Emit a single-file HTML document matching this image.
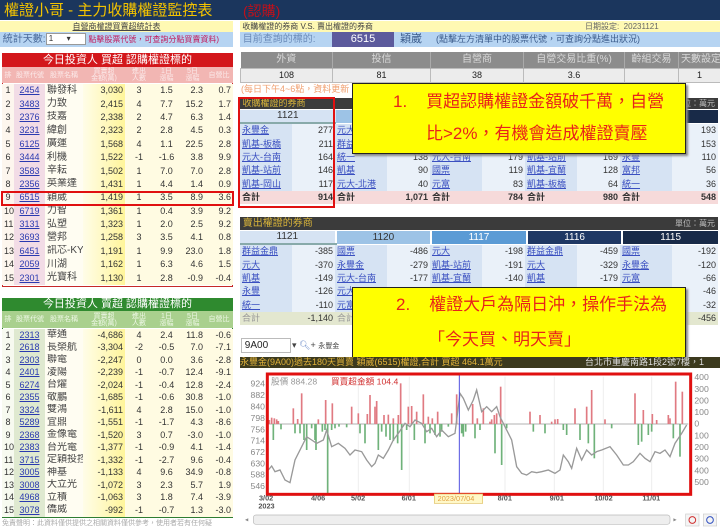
<!DOCTYPE html>
<html><head><meta charset="utf-8">
<style>
*{margin:0;padding:0;box-sizing:border-box}
body{width:720px;height:529px;overflow:hidden;background:#fff;font-family:"Liberation Sans","Noto Sans CJK TC",sans-serif;font-size:9px;color:#333;position:relative}
.a{position:absolute}
table{border-collapse:collapse;table-layout:fixed}
td{white-space:nowrap;overflow:hidden;padding:0 2px;line-height:1}
.lt td{height:13.4px;text-align:right;font-size:9px;color:#333}
.lt td.c0{text-align:center;background:#fdf6ee}
.lt td.c1{text-align:center;background:#f2dce6}
.lt td.c1 u{color:#2a3ab0}
.lt td.c2{text-align:left;background:#fffdf2;font-size:10px;color:#444}
.lt td.c3{background:linear-gradient(90deg,#fffde8,#fff59a)}
.lt td.cx{background:#fffbe2;text-align:center}
.lt td.cy{background:#fffbe2}
.gt td{height:12.5px}
.gt td.c1{background:#dfe9d0}
.gt td.c0{background:#f7faf0}
.bk td{height:13.4px;font-size:9px}
.bk td.n{background:#d6e3f3;text-align:left}
.bk td.n u{color:#3a4fc0}
.bk td.v{background:#eaf1f9;text-align:right}
.bk tr.s td{background:#f6dada;font-weight:bold;color:#333}
.sk tr.s td{background:#e3e7cf;font-weight:normal}
.dh td{height:13px;text-align:center;font-size:10px}
</style></head><body>

<!-- title bar -->
<div class="a" style="left:0;top:0;width:720px;height:20px;background:#1b365d"></div>
<div class="a" style="left:4px;top:2px;font-size:15px;color:#f3c300;line-height:17px;white-space:nowrap">權證小哥 - 主力收購權證監控表</div>
<div class="a" style="left:243px;top:3px;font-size:14px;color:#c0101a;line-height:16px;white-space:nowrap">(認購)</div>

<!-- subheaders -->
<div class="a" style="left:0;top:21px;width:233px;height:11px;background:#fff9b3;text-align:center;font-size:8px;line-height:11px;color:#444;white-space:nowrap"><u>自營商權證買賣超統計表</u></div>
<div class="a" style="left:240px;top:21px;width:480px;height:11px;background:#fff9b3;font-size:8px;line-height:11px;color:#444;white-space:nowrap">&nbsp;收購權證的券商 V.S. 賣出權證的券商<span style="position:absolute;left:345px;color:#666">日期設定: &nbsp;20231121</span></div>

<div class="a" style="left:0;top:32px;width:233px;height:15px;background:#b6d4f2;font-size:10px;line-height:15px;color:#4a6a9a;white-space:nowrap;overflow:hidden">&nbsp;統計天數:<span style="display:inline-block;width:40px;height:12px;background:#fff;border:1px solid #999;vertical-align:middle;font-size:8px;line-height:10px;color:#333">&nbsp;1 &nbsp;&nbsp;&nbsp;&nbsp;&nbsp;▾</span> <span style="color:#c2185b;font-size:8px">點擊股票代號，可查詢分點買賣資料)</span></div>
<div class="a" style="left:240px;top:32px;width:480px;height:15px;background:#b6d4f2;font-size:10px;line-height:15px;color:#6a8ab8;white-space:nowrap">&nbsp;目前查詢的標的:
<span style="position:absolute;left:92px;top:0;width:62px;height:15px;background:#5c5a9c;color:#fff;text-align:center;font-size:11px">6515</span>
<span style="position:absolute;left:160px;color:#3a5a8a;font-size:11px">穎崴</span>
<span style="position:absolute;left:196px;color:#3a5a8a;font-size:9px">(點擊左方清單中的股票代號，可查詢分點進出狀況)</span></div>

<!-- left red table -->
<div class="a" style="left:2px;top:53px;width:231px;height:234px;border:1px solid #c62828"></div>
<div class="a" style="left:2px;top:53px;width:231px;height:14px;background:#d3171b;color:#fff;text-align:center;font-size:11px;line-height:14px">今日投資人 買超 認購權證標的</div>
<table class="a" style="left:2px;top:67px;width:231px">
<colgroup><col style="width:12px"><col style="width:31px"><col style="width:38px"><col style="width:42px"><col style="width:28px"><col style="width:27px"><col style="width:25px"><col style="width:28px"></colgroup>
<tr style="height:16px;background:#f2b6b3;color:#fbeaea;font-size:7px;text-align:center"><td>排</td><td>股票代號</td><td>股票名稱</td><td>買賣超<br>金額(萬)</td><td>進出<br>人數</td><td>1日<br>漲幅</td><td>5日<br>漲幅</td><td>自營比</td></tr>
</table>
<table class="a lt" style="left:2px;top:84px;width:231px">
<colgroup><col style="width:12px"><col style="width:31px"><col style="width:38px"><col style="width:42px"><col style="width:28px"><col style="width:27px"><col style="width:25px"><col style="width:28px"></colgroup>
<tr><td class="c0">1</td><td class="c1"><u>2454</u></td><td class="c2">聯發科</td><td class="c3">3,030</td><td class="cx">3</td><td class="cx">1.5</td><td class="cy">2.3</td><td class="cy">0.7</td></tr>
<tr><td class="c0">2</td><td class="c1"><u>3483</u></td><td class="c2">力致</td><td class="c3">2,415</td><td class="cx">4</td><td class="cx">7.7</td><td class="cy">15.2</td><td class="cy">1.7</td></tr>
<tr><td class="c0">3</td><td class="c1"><u>2376</u></td><td class="c2">技嘉</td><td class="c3">2,338</td><td class="cx">2</td><td class="cx">4.7</td><td class="cy">6.3</td><td class="cy">1.4</td></tr>
<tr><td class="c0">4</td><td class="c1"><u>3231</u></td><td class="c2">緯創</td><td class="c3">2,323</td><td class="cx">2</td><td class="cx">2.8</td><td class="cy">4.5</td><td class="cy">0.3</td></tr>
<tr><td class="c0">5</td><td class="c1"><u>6125</u></td><td class="c2">廣運</td><td class="c3">1,568</td><td class="cx">4</td><td class="cx">1.1</td><td class="cy">22.5</td><td class="cy">2.8</td></tr>
<tr><td class="c0">6</td><td class="c1"><u>3444</u></td><td class="c2">利機</td><td class="c3">1,522</td><td class="cx">-1</td><td class="cx">-1.6</td><td class="cy">3.8</td><td class="cy">9.9</td></tr>
<tr><td class="c0">7</td><td class="c1"><u>3583</u></td><td class="c2">辛耘</td><td class="c3">1,502</td><td class="cx">1</td><td class="cx">7.0</td><td class="cy">7.0</td><td class="cy">2.8</td></tr>
<tr><td class="c0">8</td><td class="c1"><u>2356</u></td><td class="c2">英業達</td><td class="c3">1,431</td><td class="cx">1</td><td class="cx">4.4</td><td class="cy">1.4</td><td class="cy">0.9</td></tr>
<tr><td class="c0">9</td><td class="c1"><u>6515</u></td><td class="c2">穎崴</td><td class="c3">1,419</td><td class="cx">1</td><td class="cx">3.5</td><td class="cy">8.9</td><td class="cy">3.6</td></tr>
<tr><td class="c0">10</td><td class="c1"><u>6719</u></td><td class="c2">力智</td><td class="c3">1,361</td><td class="cx">1</td><td class="cx">0.4</td><td class="cy">3.9</td><td class="cy">9.2</td></tr>
<tr><td class="c0">11</td><td class="c1"><u>3131</u></td><td class="c2">弘塑</td><td class="c3">1,323</td><td class="cx">1</td><td class="cx">2.0</td><td class="cy">2.5</td><td class="cy">9.2</td></tr>
<tr><td class="c0">12</td><td class="c1"><u>3693</u></td><td class="c2">營邦</td><td class="c3">1,258</td><td class="cx">3</td><td class="cx">3.5</td><td class="cy">4.1</td><td class="cy">0.8</td></tr>
<tr><td class="c0">13</td><td class="c1"><u>6451</u></td><td class="c2">訊芯-KY</td><td class="c3">1,191</td><td class="cx">1</td><td class="cx">9.9</td><td class="cy">23.0</td><td class="cy">1.8</td></tr>
<tr><td class="c0">14</td><td class="c1"><u>2059</u></td><td class="c2">川湖</td><td class="c3">1,162</td><td class="cx">1</td><td class="cx">6.3</td><td class="cy">4.6</td><td class="cy">1.5</td></tr>
<tr><td class="c0">15</td><td class="c1"><u>2301</u></td><td class="c2">光寶科</td><td class="c3">1,130</td><td class="cx">1</td><td class="cx">2.8</td><td class="cy">-0.9</td><td class="cy">-0.4</td></tr>
</table>
<div class="a" style="left:1px;top:191px;width:233px;height:15px;border:2px solid #e01010"></div>

<!-- left green table -->
<div class="a" style="left:2px;top:298px;width:231px;height:220px;border:1px solid #2e7d32"></div>
<div class="a" style="left:2px;top:298px;width:231px;height:13px;background:#2f8a2f;color:#fff;text-align:center;font-size:11px;line-height:13px">今日投資人 賣超 認購權證標的</div>
<table class="a" style="left:2px;top:311px;width:231px">
<colgroup><col style="width:12px"><col style="width:31px"><col style="width:38px"><col style="width:42px"><col style="width:28px"><col style="width:27px"><col style="width:25px"><col style="width:28px"></colgroup>
<tr style="height:17px;background:#a9d08e;color:#eef7e6;font-size:7px;text-align:center"><td>排</td><td>股票代號</td><td>股票名稱</td><td>買賣超<br>金額(萬)</td><td>進出<br>人數</td><td>1日<br>漲幅</td><td>5日<br>漲幅</td><td>自營比</td></tr>
</table>
<table class="a lt gt" style="left:2px;top:329px;width:231px">
<colgroup><col style="width:12px"><col style="width:31px"><col style="width:38px"><col style="width:42px"><col style="width:28px"><col style="width:27px"><col style="width:25px"><col style="width:28px"></colgroup>
<tr><td class="c0">1</td><td class="c1"><u>2313</u></td><td class="c2">華通</td><td class="c3">-4,686</td><td class="cx">4</td><td class="cx">2.4</td><td class="cy">11.8</td><td class="cy">-0.6</td></tr>
<tr><td class="c0">2</td><td class="c1"><u>2618</u></td><td class="c2">長榮航</td><td class="c3">-3,304</td><td class="cx">-2</td><td class="cx">-0.5</td><td class="cy">7.0</td><td class="cy">-7.1</td></tr>
<tr><td class="c0">3</td><td class="c1"><u>2303</u></td><td class="c2">聯電</td><td class="c3">-2,247</td><td class="cx">0</td><td class="cx">0.0</td><td class="cy">3.6</td><td class="cy">-2.8</td></tr>
<tr><td class="c0">4</td><td class="c1"><u>2401</u></td><td class="c2">凌陽</td><td class="c3">-2,239</td><td class="cx">-1</td><td class="cx">-0.7</td><td class="cy">12.4</td><td class="cy">-9.1</td></tr>
<tr><td class="c0">5</td><td class="c1"><u>6274</u></td><td class="c2">台燿</td><td class="c3">-2,024</td><td class="cx">-1</td><td class="cx">-0.4</td><td class="cy">12.8</td><td class="cy">-2.4</td></tr>
<tr><td class="c0">6</td><td class="c1"><u>2355</u></td><td class="c2">敬鵬</td><td class="c3">-1,685</td><td class="cx">-1</td><td class="cx">-0.6</td><td class="cy">30.8</td><td class="cy">-1.0</td></tr>
<tr><td class="c0">7</td><td class="c1"><u>3324</u></td><td class="c2">雙鴻</td><td class="c3">-1,611</td><td class="cx">4</td><td class="cx">2.8</td><td class="cy">15.0</td><td class="cy">-1.0</td></tr>
<tr><td class="c0">8</td><td class="c1"><u>5289</u></td><td class="c2">宜鼎</td><td class="c3">-1,551</td><td class="cx">-1</td><td class="cx">-1.7</td><td class="cy">4.3</td><td class="cy">-8.6</td></tr>
<tr><td class="c0">9</td><td class="c1"><u>2368</u></td><td class="c2">金像電</td><td class="c3">-1,520</td><td class="cx">3</td><td class="cx">0.7</td><td class="cy">-3.0</td><td class="cy">-1.0</td></tr>
<tr><td class="c0">10</td><td class="c1"><u>2383</u></td><td class="c2">台光電</td><td class="c3">-1,377</td><td class="cx">-1</td><td class="cx">-0.9</td><td class="cy">4.1</td><td class="cy">-1.4</td></tr>
<tr><td class="c0">11</td><td class="c1"><u>3715</u></td><td class="c2">定穎投控</td><td class="c3">-1,332</td><td class="cx">-1</td><td class="cx">-2.7</td><td class="cy">9.6</td><td class="cy">-0.4</td></tr>
<tr><td class="c0">12</td><td class="c1"><u>3005</u></td><td class="c2">神基</td><td class="c3">-1,133</td><td class="cx">4</td><td class="cx">9.6</td><td class="cy">34.9</td><td class="cy">-0.8</td></tr>
<tr><td class="c0">13</td><td class="c1"><u>3008</u></td><td class="c2">大立光</td><td class="c3">-1,072</td><td class="cx">3</td><td class="cx">2.3</td><td class="cy">5.7</td><td class="cy">1.9</td></tr>
<tr><td class="c0">14</td><td class="c1"><u>4968</u></td><td class="c2">立積</td><td class="c3">-1,063</td><td class="cx">3</td><td class="cx">1.8</td><td class="cy">7.4</td><td class="cy">-3.9</td></tr>
<tr><td class="c0">15</td><td class="c1"><u>3078</u></td><td class="c2">僑威</td><td class="c3">-992</td><td class="cx">-1</td><td class="cx">-0.7</td><td class="cy">1.3</td><td class="cy">-3.0</td></tr>
</table>
<div class="a" style="left:2px;top:519px;font-size:7px;color:#aaa;line-height:9px;white-space:nowrap">免責聲明：此資料僅供提供之相關資料僅供參考，使用者若有任何疑</div>

<!-- right summary -->
<table class="a" style="left:240px;top:52px;width:480px">
<colgroup><col style="width:92px"><col style="width:98px"><col style="width:93px"><col style="width:101px"><col style="width:54px"><col style="width:42px"></colgroup>
<tr style="height:16px;background:#8c8c8c;color:#d8d8d8;font-size:10px;text-align:center"><td style="border-right:1px solid #aaa">外資</td><td style="border-right:1px solid #aaa">投信</td><td style="border-right:1px solid #aaa">自營商</td><td style="border-right:1px solid #aaa">自營交易比重(%)</td><td style="border-right:1px solid #aaa">齡組交易</td><td>天數設定</td></tr>
<tr style="height:14px;background:#ececec;font-size:9px;text-align:center;color:#222"><td style="border:1px solid #bbb">108</td><td style="border:1px solid #bbb">81</td><td style="border:1px solid #bbb">38</td><td style="border:1px solid #bbb">3.6</td><td style="border:1px solid #bbb"></td><td style="border:1px solid #bbb">1</td></tr>
</table>
<div class="a" style="left:241px;top:84px;font-size:9px;color:#f0a070;line-height:10px;white-space:nowrap">(每日下午4~6點，資料更新</div>

<!-- buy brokers -->
<div class="a" style="left:240px;top:98px;width:478px;height:11px;background:#3b3b3b;color:#d9b43a;font-size:9px;line-height:11px;white-space:nowrap">&nbsp;收購權證的券商<span style="position:absolute;right:3px;color:#bbb;font-size:8px">單位：萬元</span></div>
<table class="a dh" style="left:240px;top:110px;width:478px">
<tr><td style="background:#d6e3f3;border-bottom:2px solid #8aa">1121</td><td style="background:#9dc3e6">1120</td><td style="background:#5b9bd5;color:#fff">1117</td><td style="background:#1f3864;color:#fff">1116</td><td style="background:#182a48;color:#fff">1115</td></tr>
</table>
<table class="a bk" style="left:240px;top:124px;width:478px">
<colgroup><col style="width:52px"><col style="width:43px"><col style="width:52px"><col style="width:43px"><col style="width:52px"><col style="width:43px"><col style="width:52px"><col style="width:43px"><col style="width:52px"><col style="width:46px"></colgroup>
<tr><td class="n"><u>永豐金</u></td><td class="v">277</td><td class="n"><u>元大</u></td><td class="v"></td><td class="n"></td><td class="v"></td><td class="n"></td><td class="v"></td><td class="n"></td><td class="v">193</td></tr>
<tr><td class="n"><u>凱基-板橋</u></td><td class="v">211</td><td class="n"><u>群益</u></td><td class="v"></td><td class="n"></td><td class="v"></td><td class="n"></td><td class="v"></td><td class="n"></td><td class="v">153</td></tr>
<tr><td class="n"><u>元大-台南</u></td><td class="v">164</td><td class="n"><u>統一</u></td><td class="v">138</td><td class="n"><u>元大-台南</u></td><td class="v">179</td><td class="n"><u>凱基-站前</u></td><td class="v">169</td><td class="n"><u>永豐</u></td><td class="v">110</td></tr>
<tr><td class="n"><u>凱基-站前</u></td><td class="v">146</td><td class="n"><u>凱基</u></td><td class="v">90</td><td class="n"><u>國票</u></td><td class="v">119</td><td class="n"><u>凱基-宜蘭</u></td><td class="v">128</td><td class="n"><u>富邦</u></td><td class="v">56</td></tr>
<tr><td class="n"><u>凱基-岡山</u></td><td class="v">117</td><td class="n"><u>元大-北港</u></td><td class="v">40</td><td class="n"><u>元富</u></td><td class="v">83</td><td class="n"><u>凱基-板橋</u></td><td class="v">64</td><td class="n"><u>統一</u></td><td class="v">36</td></tr>
<tr class="s"><td style="text-align:left">合計</td><td style="text-align:right">914</td><td style="text-align:left">合計</td><td style="text-align:right">1,071</td><td style="text-align:left">合計</td><td style="text-align:right">784</td><td style="text-align:left">合計</td><td style="text-align:right">980</td><td style="text-align:left">合計</td><td style="text-align:right">548</td></tr>
</table>
<div class="a" style="left:238px;top:97px;width:97px;height:111px;border:2.5px solid #e01010"></div>

<!-- sell brokers -->
<div class="a" style="left:240px;top:217px;width:478px;height:13px;background:#3b3b3b;color:#d9b43a;font-size:10px;line-height:13px;white-space:nowrap">&nbsp;賣出權證的券商<span style="position:absolute;right:3px;color:#bbb;font-size:8px">單位：萬元</span></div>
<table class="a dh" style="left:240px;top:231px;width:478px">
<tr><td style="background:#d6e3f3;border-bottom:2px solid #8aa;border-right:2px solid #fff">1121</td><td style="background:#9dc3e6;border-right:2px solid #fff">1120</td><td style="background:#5b9bd5;color:#fff;border-right:2px solid #fff">1117</td><td style="background:#1f3864;color:#fff;border-right:2px solid #fff">1116</td><td style="background:#182a48;color:#fff">1115</td></tr>
</table>
<table class="a bk sk" style="left:240px;top:245px;width:478px">
<colgroup><col style="width:52px"><col style="width:43px"><col style="width:52px"><col style="width:43px"><col style="width:52px"><col style="width:43px"><col style="width:52px"><col style="width:43px"><col style="width:52px"><col style="width:46px"></colgroup>
<tr><td class="n"><u>群益金鼎</u></td><td class="v">-385</td><td class="n"><u>國票</u></td><td class="v">-486</td><td class="n"><u>元大</u></td><td class="v">-198</td><td class="n"><u>群益金鼎</u></td><td class="v">-459</td><td class="n"><u>國票</u></td><td class="v">-192</td></tr>
<tr><td class="n"><u>元大</u></td><td class="v">-370</td><td class="n"><u>永豐金</u></td><td class="v">-279</td><td class="n"><u>凱基-站前</u></td><td class="v">-191</td><td class="n"><u>元大</u></td><td class="v">-329</td><td class="n"><u>永豐金</u></td><td class="v">-120</td></tr>
<tr><td class="n"><u>凱基</u></td><td class="v">-149</td><td class="n"><u>元大-台南</u></td><td class="v">-177</td><td class="n"><u>凱基-宜蘭</u></td><td class="v">-140</td><td class="n"><u>凱基</u></td><td class="v">-179</td><td class="n"><u>元富</u></td><td class="v">-66</td></tr>
<tr><td class="n"><u>永豐</u></td><td class="v">-126</td><td class="n"><u>元大</u></td><td class="v"></td><td class="n"></td><td class="v"></td><td class="n"></td><td class="v"></td><td class="n"></td><td class="v">-46</td></tr>
<tr><td class="n"><u>統一</u></td><td class="v">-110</td><td class="n"><u>元富</u></td><td class="v"></td><td class="n"></td><td class="v"></td><td class="n"></td><td class="v"></td><td class="n"></td><td class="v">-32</td></tr>
<tr class="s"><td style="text-align:left;color:#999">合計</td><td style="text-align:right">-1,140</td><td style="text-align:left;color:#999">合計</td><td></td><td></td><td></td><td></td><td></td><td></td><td style="text-align:right">-456</td></tr>
</table>

<!-- callouts -->
<div class="a" style="left:352px;top:83px;width:334px;height:71px;background:#ffff00;border:1.5px solid #222;box-shadow:2px 2px 2px #888"></div>
<div class="a" style="left:393px;top:92px;font-size:17px;color:#e8231a;line-height:20px;white-space:nowrap">1.&nbsp;&nbsp;&nbsp; 買超認購權證金額破千萬，自營</div>
<div class="a" style="left:426px;top:124px;font-size:17px;color:#e8231a;line-height:20px;white-space:nowrap">比&gt;2%，有機會造成權證賣壓</div>

<div class="a" style="left:352px;top:287px;width:334px;height:71px;background:#ffff00;border:1.5px solid #222;box-shadow:2px 2px 2px #888"></div>
<div class="a" style="left:396px;top:295px;font-size:17px;color:#e8231a;line-height:20px;white-space:nowrap">2.&nbsp;&nbsp;&nbsp; 權證大戶為隔日沖，操作手法為</div>
<div class="a" style="left:428px;top:330px;font-size:17px;color:#e8231a;line-height:20px;white-space:nowrap">「今天買、明天賣」</div>

<!-- stock selector -->
<div class="a" style="left:241px;top:338px;width:50px;height:15px;border:1px solid #bbb;background:#fff;font-size:10px;line-height:13px;color:#222">&nbsp;9A00</div>
<div class="a" style="left:292px;top:339px;font-size:9px;color:#444;line-height:13px;white-space:nowrap">▾ <span style="color:#6a8ac8">🔍︎</span>+ <span style="font-size:7px">永豐金</span></div>

<div class="a" style="left:240px;top:357px;width:480px;height:11px;background:#3c3a1e;color:#e0b23a;font-size:9px;line-height:11px;white-space:nowrap;overflow:hidden">永豐金(9A00)過去180天買賣 穎崴(6515)權證,合計 買超 464.1萬元<span style="position:absolute;left:345px;color:#ddd">台北市重慶南路1段2號7樓，1</span></div>

<!-- chart -->
<svg class="a" style="left:240px;top:368px" width="480" height="161" viewBox="0 0 480 161">
<rect x="0" y="0" width="480" height="161" fill="#fff"/>
<g transform="translate(-5,-28) scale(0.33333)">
<g stroke="#eee" stroke-width="3">
<line x1="370" y1="110" x2="370" y2="455"/><line x1="523" y1="110" x2="523" y2="455"/><line x1="810" y1="110" x2="810" y2="455"/><line x1="958" y1="110" x2="958" y2="455"/><line x1="1105" y1="110" x2="1105" y2="455"/><line x1="1250" y1="110" x2="1250" y2="455"/>
</g>
<line x1="100" y1="252" x2="1360" y2="252" stroke="#999" stroke-width="2"/>
<g stroke="#e07a82" stroke-width="5">
<line x1="103" y1="252" x2="103" y2="240"/><line x1="110" y1="252" x2="110" y2="233"/><line x1="118" y1="252" x2="118" y2="235"/><line x1="125" y1="252" x2="125" y2="238"/><line x1="130" y1="252" x2="130" y2="243"/><line x1="175" y1="252" x2="175" y2="205"/><line x1="188" y1="252" x2="188" y2="237"/><line x1="200" y1="252" x2="200" y2="160"/><line x1="250" y1="252" x2="250" y2="238"/><line x1="272" y1="252" x2="272" y2="180"/><line x1="292" y1="252" x2="292" y2="190"/><line x1="350" y1="252" x2="350" y2="200"/><line x1="370" y1="252" x2="370" y2="220"/><line x1="397" y1="252" x2="397" y2="222"/><line x1="405" y1="252" x2="405" y2="165"/><line x1="420" y1="252" x2="420" y2="200"/><line x1="425" y1="252" x2="425" y2="183"/><line x1="447" y1="252" x2="447" y2="225"/><line x1="460" y1="252" x2="460" y2="224"/><line x1="475" y1="252" x2="475" y2="235"/><line x1="490" y1="252" x2="490" y2="225"/><line x1="497" y1="252" x2="497" y2="130"/><line x1="520" y1="252" x2="520" y2="200"/><line x1="530" y1="252" x2="530" y2="198"/><line x1="545" y1="252" x2="545" y2="215"/><line x1="565" y1="252" x2="565" y2="163"/><line x1="580" y1="252" x2="580" y2="230"/><line x1="592" y1="252" x2="592" y2="235"/><line x1="608" y1="252" x2="608" y2="215"/><line x1="650" y1="252" x2="650" y2="220"/><line x1="665" y1="252" x2="665" y2="163"/><line x1="713" y1="252" x2="713" y2="192"/><line x1="727" y1="252" x2="727" y2="235"/><line x1="745" y1="252" x2="745" y2="205"/><line x1="765" y1="252" x2="765" y2="245"/><line x1="770" y1="252" x2="770" y2="238"/><line x1="778" y1="252" x2="778" y2="225"/><line x1="785" y1="252" x2="785" y2="220"/><line x1="797" y1="252" x2="797" y2="140"/><line x1="885" y1="252" x2="885" y2="215"/><line x1="915" y1="252" x2="915" y2="225"/><line x1="950" y1="252" x2="950" y2="245"/><line x1="960" y1="252" x2="960" y2="238"/><line x1="968" y1="252" x2="968" y2="237"/><line x1="1020" y1="252" x2="1020" y2="205"/><line x1="1055" y1="252" x2="1055" y2="200"/><line x1="1070" y1="252" x2="1070" y2="150"/><line x1="1110" y1="252" x2="1110" y2="238"/><line x1="1200" y1="252" x2="1200" y2="160"/><line x1="1225" y1="252" x2="1225" y2="210"/><line x1="1252" y1="252" x2="1252" y2="222"/><line x1="1265" y1="252" x2="1265" y2="240"/><line x1="1300" y1="252" x2="1300" y2="225"/><line x1="1305" y1="252" x2="1305" y2="235"/><line x1="1322" y1="252" x2="1322" y2="125"/><line x1="1342" y1="252" x2="1342" y2="155"/>
</g>
<g stroke="#6fb27a" stroke-width="5">
<line x1="115" y1="252" x2="115" y2="300"/><line x1="138" y1="252" x2="138" y2="268"/><line x1="180" y1="252" x2="180" y2="280"/><line x1="195" y1="252" x2="195" y2="280"/><line x1="207" y1="252" x2="207" y2="300"/><line x1="215" y1="252" x2="215" y2="330"/><line x1="230" y1="252" x2="230" y2="265"/><line x1="240" y1="252" x2="240" y2="300"/><line x1="243" y1="252" x2="243" y2="330"/><line x1="262" y1="252" x2="262" y2="275"/><line x1="270" y1="252" x2="270" y2="270"/><line x1="278" y1="252" x2="278" y2="460"/><line x1="290" y1="252" x2="290" y2="270"/><line x1="300" y1="252" x2="300" y2="265"/><line x1="312" y1="252" x2="312" y2="260"/><line x1="335" y1="252" x2="335" y2="262"/><line x1="375" y1="252" x2="375" y2="280"/><line x1="390" y1="252" x2="390" y2="310"/><line x1="430" y1="252" x2="430" y2="330"/><line x1="440" y1="252" x2="440" y2="275"/><line x1="453" y1="252" x2="453" y2="290"/><line x1="465" y1="252" x2="465" y2="300"/><line x1="475" y1="252" x2="475" y2="303"/><line x1="488" y1="252" x2="488" y2="310"/><line x1="500" y1="252" x2="500" y2="390"/><line x1="515" y1="252" x2="515" y2="270"/><line x1="538" y1="252" x2="538" y2="300"/><line x1="570" y1="252" x2="570" y2="310"/><line x1="585" y1="252" x2="585" y2="280"/><line x1="600" y1="252" x2="600" y2="285"/><line x1="615" y1="252" x2="615" y2="290"/><line x1="620" y1="252" x2="620" y2="275"/><line x1="640" y1="252" x2="640" y2="260"/><line x1="680" y1="252" x2="680" y2="280"/><line x1="685" y1="252" x2="685" y2="290"/><line x1="692" y1="252" x2="692" y2="275"/><line x1="720" y1="252" x2="720" y2="295"/><line x1="735" y1="252" x2="735" y2="270"/><line x1="780" y1="252" x2="780" y2="340"/><line x1="800" y1="252" x2="800" y2="375"/><line x1="815" y1="252" x2="815" y2="265"/><line x1="895" y1="252" x2="895" y2="275"/><line x1="930" y1="252" x2="930" y2="280"/><line x1="985" y1="252" x2="985" y2="270"/><line x1="995" y1="252" x2="995" y2="285"/><line x1="1035" y1="252" x2="1035" y2="300"/><line x1="1060" y1="252" x2="1060" y2="310"/><line x1="1078" y1="252" x2="1078" y2="355"/><line x1="1130" y1="252" x2="1130" y2="265"/><line x1="1210" y1="252" x2="1210" y2="315"/><line x1="1220" y1="252" x2="1220" y2="305"/><line x1="1240" y1="252" x2="1240" y2="285"/><line x1="1250" y1="252" x2="1250" y2="275"/><line x1="1315" y1="252" x2="1315" y2="295"/><line x1="1335" y1="252" x2="1335" y2="350"/>
</g>
<polyline fill="none" stroke="#999" stroke-width="4" points="100,390 110,378 120,395 135,390 150,420 165,428 180,360 200,320 215,290 230,300 245,310 265,300 275,270 290,320 310,310 330,325 345,345 360,330 380,335 395,360 410,380 420,370 430,345 445,355 460,330 475,300 490,280 510,250 525,260 540,240 560,250 575,275 590,265 605,290 620,270 640,290 660,280 675,160 685,175 700,210 715,180 725,150 740,215 755,200 770,215 785,200 795,230 810,260 830,300 845,380 860,400 875,405 890,395 905,398 920,395 940,390 960,400 975,390 985,345 1000,365 1010,385 1025,325 1040,360 1055,330 1070,345 1085,335 1100,330 1125,320 1145,345 1165,375 1180,375 1195,365 1215,340 1230,355 1245,365 1260,335 1275,340 1290,330 1305,350 1320,310 1340,280 1355,255"/>
<line x1="673" y1="105" x2="673" y2="460" stroke="#5050e0" stroke-width="3"/>
<rect x="97" y="102" width="1270" height="361" fill="none" stroke="#e01010" stroke-width="9"/>
<g font-size="26" fill="#888" text-anchor="end" font-family="Liberation Sans">
<text x="90" y="139">924</text><text x="90" y="174">882</text><text x="90" y="208">840</text><text x="90" y="243">798</text><text x="90" y="277">756</text><text x="90" y="311">714</text><text x="90" y="345">672</text><text x="90" y="379">630</text><text x="90" y="413">588</text><text x="90" y="447">546</text>
</g>
<g font-size="26" fill="#888" font-family="Liberation Sans">
<text x="1378" y="120">400</text><text x="1378" y="156">300</text><text x="1378" y="191">200</text><text x="1378" y="225">100</text><text x="1378" y="260">0</text><text x="1378" y="295">100</text><text x="1378" y="330">200</text><text x="1378" y="365">300</text><text x="1378" y="400">400</text><text x="1378" y="435">500</text>
</g>
<text x="108" y="133" font-size="26" fill="#999" font-family="Liberation Sans,Noto Sans CJK TC">股價 884.28</text>
<text x="288" y="133" font-size="26" fill="#d03030" font-family="Liberation Sans,Noto Sans CJK TC">買賣超金額 104.4</text>
<g font-size="22" fill="#555" font-family="Liberation Sans" font-weight="bold">
<text x="72" y="482">3/02</text><text x="70" y="506">2023</text><text x="228" y="482">4/06</text><text x="348" y="482">5/02</text><text x="500" y="482">6/01</text><text x="788" y="482">8/01</text><text x="944" y="482">9/01</text><text x="1078" y="482">10/02</text><text x="1222" y="482">11/01</text>
</g>
<rect x="598" y="462" width="145" height="28" fill="#fff8c8" stroke="#e0c060" stroke-width="2"/>
<text x="608" y="483" font-size="22" fill="#e0a040" font-family="Liberation Sans">2023/07/04</text>
<rect x="55" y="525" width="1250" height="28" rx="8" fill="#eee" stroke="#bbb" stroke-width="2"/>
<text x="30" y="545" font-size="20" fill="#888">◂</text><text x="1315" y="545" font-size="20" fill="#888">▸</text>
<rect x="1352" y="522" width="40" height="36" fill="#f4f4f4" stroke="#ccc" stroke-width="2"/><rect x="1405" y="522" width="40" height="36" fill="#f4f4f4" stroke="#ccc" stroke-width="2"/>
<circle cx="1372" cy="540" r="10" fill="none" stroke="#d03030" stroke-width="3"/><circle cx="1425" cy="540" r="10" fill="none" stroke="#3050c0" stroke-width="3"/>
</g>
</svg>
</body></html>
